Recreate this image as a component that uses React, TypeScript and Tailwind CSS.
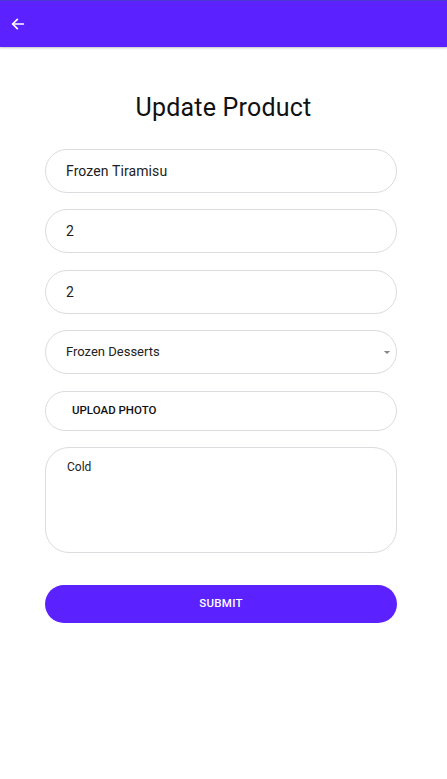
import React from "react";

export default function App() {
  return (
    <div className="w-[447px] h-[779px] bg-white relative" style={{ fontFamily: "Roboto, 'Noto Sans', sans-serif" }}>
      <div className="h-[47px] bg-[#5b22ff] border-t border-[#4a3bd0] flex items-center px-[10px] shadow-[0_1px_2px_rgba(0,0,0,0.25)]">
        <svg width="16" height="16" viewBox="0 0 24 24" fill="none" stroke="white" strokeWidth="2.6" strokeLinecap="round" strokeLinejoin="round">
          <path d="M20 12H4" />
          <path d="M11 5l-7 7 7 7" />
        </svg>
      </div>
      <div className="flex flex-col">
        <h1 className="mt-[46px] text-center text-[25px] leading-[30px] text-[#111] tracking-[0.2px]">Update Product</h1>
        <div className="mt-[26px] ml-[45px] w-[352px] flex flex-col">
          <div className="h-[44px] rounded-full border border-[#dcdce0] flex items-center pl-[20px] text-[14px] text-[#222] tracking-[0.1px]">Frozen Tiramisu</div>
          <div className="mt-[16px] h-[44px] rounded-full border border-[#dcdce0] flex items-center pl-[20px] text-[14px] text-[#222]">2</div>
          <div className="mt-[17px] h-[44px] rounded-full border border-[#dcdce0] flex items-center pl-[20px] text-[14px] text-[#222]">2</div>
          <div className="mt-[16px] h-[44px] rounded-full border border-[#dcdce0] flex items-center justify-between pl-[20px] pr-[5px] text-[13px] text-[#222]">
            <span>Frozen Desserts</span>
            <svg width="8" height="5" viewBox="0 0 10 6"><path d="M1 1h8L5 5z" fill="#888" /></svg>
          </div>
          <div className="mt-[17px] h-[40px] rounded-full border border-[#dcdce0] flex items-center pl-[26px] text-[11.5px] font-medium text-[#111]">UPLOAD PHOTO</div>
          <div className="mt-[16px] h-[106px] rounded-[24px] border border-[#dcdce0] pl-[21px] pt-[10px] text-[12px] text-[#222]">Cold</div>
          <div className="mt-[32px] h-[38px] rounded-full bg-[#5b22ff] flex items-center justify-center text-[11.5px] font-medium text-white tracking-[0.3px]">SUBMIT</div>
        </div>
      </div>
    </div>
  );
}
